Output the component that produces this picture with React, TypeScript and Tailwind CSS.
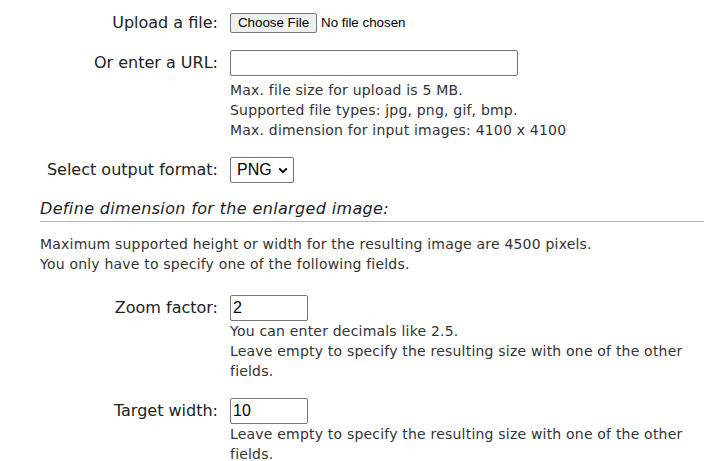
export default function App() {
  const label = "w-[218px] shrink-0 text-right text-[16px] leading-[24px] text-[#222]";
  const help = "ml-[230px] text-[14px] leading-[20px] tracking-[0.2px] text-[#333]";
  return (
    <div className="h-[461px] w-[712px] overflow-hidden bg-white font-['DejaVu_Sans',Verdana,sans-serif] text-[#222]">
      <div className="pt-[11px]">
        <div className="flex h-[24px] items-center">
          <div className={label}>Upload a file:</div>
          <div className="ml-3 flex items-center font-['Liberation_Sans',Arial,sans-serif] text-[13.333px] text-black">
            <span className="flex h-[20px] w-[87px] items-center justify-center rounded-[2px] border border-[#767676] bg-[#efefef]">
              Choose File
            </span>
            <span className="ml-[4px]">No file chosen</span>
          </div>
        </div>

        <div className="mt-[15px] flex h-[26px] items-center">
          <div className={label}>Or enter a URL:</div>
          <div className="ml-3 h-[26px] w-[288px] rounded-[2px] border border-[#767676] bg-white" />
        </div>
        <div className={`${help} mt-[4px]`}>
          <div>Max. file size for upload is 5 MB.</div>
          <div>Supported file types: jpg, png, gif, bmp.</div>
          <div>Max. dimension for input images: 4100 x 4100</div>
        </div>

        <div className="mt-[17px] flex h-[26px] items-center">
          <div className={label}>Select output format:</div>
          <div className="ml-3 flex h-[26px] w-[64px] items-center justify-between rounded-[2px] border border-[#767676] bg-white pl-[6px] pr-[5px] font-['Liberation_Sans',Arial,sans-serif] text-[16px] text-black">
            <span>PNG</span>
            <svg width="10" height="7" viewBox="0 0 10 7" className="mt-[1px]">
              <path d="M1.2 1.4 L5 5.2 L8.8 1.4" fill="none" stroke="#000" strokeWidth="1.8" />
            </svg>
          </div>
        </div>

        <div className="ml-[40px] mt-[14px] w-[664px] border-b border-[#b5b5b5] text-[16px] italic leading-[24px] tracking-[0.35px] text-[#222]">
          Define dimension for the enlarged image:
        </div>

        <div className="ml-[40px] mt-[12px] text-[14px] leading-[20px] tracking-[0.2px] text-[#333]">
          <div>Maximum supported height or width for the resulting image are 4500 pixels.</div>
          <div>You only have to specify one of the following fields.</div>
        </div>

        <div className="mt-[21px] flex h-[26px] items-center">
          <div className={label}>Zoom factor:</div>
          <div className="ml-3 flex h-[26px] w-[78px] items-center rounded-[2px] border border-[#767676] bg-white pl-[2px] font-['Liberation_Sans',Arial,sans-serif] text-[16px] text-black">
            2
          </div>
        </div>
        <div className={help}>
          <div>You can enter decimals like 2.5.</div>
          <div>Leave empty to specify the resulting size with one of the other</div>
          <div>fields.</div>
        </div>

        <div className="mt-[17px] flex h-[26px] items-center">
          <div className={label}>Target width:</div>
          <div className="ml-3 flex h-[26px] w-[78px] items-center rounded-[2px] border border-[#767676] bg-white pl-[2px] font-['Liberation_Sans',Arial,sans-serif] text-[16px] text-black">
            10
          </div>
        </div>
        <div className={help}>
          <div>Leave empty to specify the resulting size with one of the other</div>
          <div>fields.</div>
        </div>
      </div>
    </div>
  );
}
